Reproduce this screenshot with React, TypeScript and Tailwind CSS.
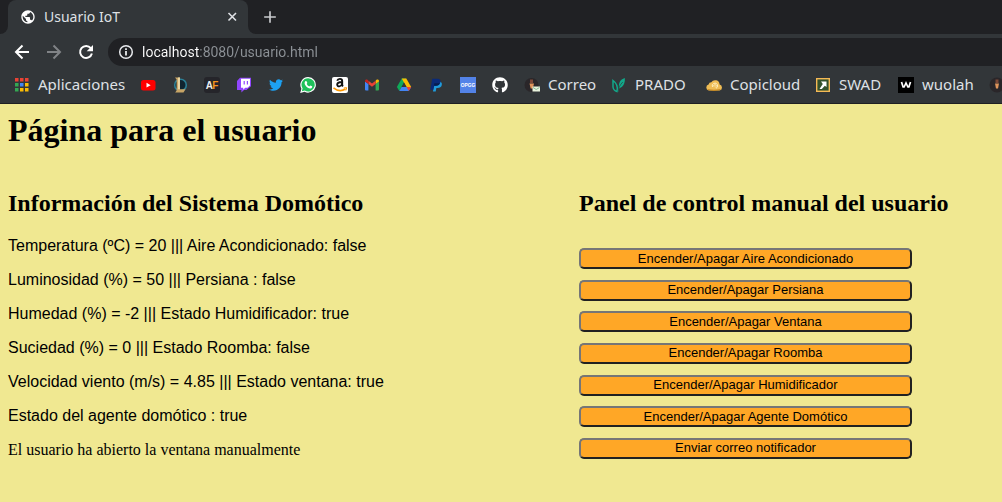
import type { ReactNode } from "react";
import { MdAdd, MdPublic } from "react-icons/md";
import { FaGithub, FaTwitter } from "react-icons/fa";

function BackIcon() {
  return (
    <svg viewBox="0 0 20 20" className="size-5" fill="none" stroke="currentColor" strokeWidth="2">
      <path d="M17 10H4.500M10.500 3.500L4 10l6.500 6.500" />
    </svg>
  );
}

function ForwardIcon() {
  return (
    <svg viewBox="0 0 20 20" className="size-5" fill="none" stroke="currentColor" strokeWidth="2">
      <path d="M3 10h12.500M9.500 3.500L16 10l-6.500 6.500" />
    </svg>
  );
}

function ReloadIcon() {
  return (
    <svg viewBox="0 0 20 20" className="size-5">
      <path d="M14.800 6.200A6 6 0 1 0 15.900 11.500" fill="none" stroke="currentColor" strokeWidth="2" />
      <path d="M17 3v6.300h-6.300z" fill="currentColor" />
    </svg>
  );
}

function CloseIcon() {
  return (
    <svg viewBox="0 0 14 14" className="size-3.5" stroke="currentColor" strokeWidth="1.600">
      <path d="M2.500 3l7.500 7.500M10 3l-7.500 7.500" />
    </svg>
  );
}

function InfoIcon() {
  return (
    <svg viewBox="0 0 16 16" className="size-4">
      <circle cx="8" cy="8" r="6.300" fill="none" stroke="currentColor" strokeWidth="1.500" />
      <path d="M8 7v4.500M8 4.200v1.800" stroke="currentColor" strokeWidth="1.800" />
    </svg>
  );
}

function AppsIcon() {
  const cells = [
    "#ea4335", "#ea4335", "#ea4335",
    "#34a853", "#4285f4", "#fbbc04",
    "#34a853", "#fbbc04", "#fbbc04",
  ];
  return (
    <svg viewBox="0 0 16 16" className="size-4">
      {cells.map((fill, i) => (
        <rect key={i} x={1 + (i % 3) * 5} y={1 + Math.floor(i / 3) * 5} width="3.500" height="3.500" fill={fill} />
      ))}
    </svg>
  );
}

function YoutubeIcon() {
  return (
    <svg viewBox="0 0 16 16" className="size-4">
      <rect x="1" y="3" width="14.5" height="10.5" rx="2.5" fill="#f00" />
      <path d="M6.5 5.8v4.8l4.2-2.4z" fill="#fff" />
    </svg>
  );
}

function LeagueIcon() {
  return (
    <svg viewBox="0 0 16 16" className="size-4">
      <circle cx="8.5" cy="8" r="5.800" fill="#10242f" stroke="#2b7f96" strokeWidth="1.600" />
      <path d="M3 .5h5v11.800h5.500L11.500 15.500H3.200l1.400-2V2.500z" fill="#c8a566" />
      <path d="M6 .5h2v11.800H6z" fill="#e8d6a4" />
    </svg>
  );
}

function AfIcon() {
  return (
    <svg viewBox="0 0 16 16" className="size-4">
      <rect width="16" height="16" rx="3" fill="#25252a" />
      <text x="1.800" y="12" fontFamily="Liberation Sans, sans-serif" fontWeight="bold" fontSize="10" fill="#eee">
        A
      </text>
      <text x="8.300" y="12" fontFamily="Liberation Sans, sans-serif" fontWeight="bold" fontSize="10" fill="#f7941d">
        F
      </text>
    </svg>
  );
}

function TwitchIcon() {
  return (
    <svg viewBox="0 0 16 16" className="size-4">
      <path d="M4 0.8h11v8.4L10.5 13H8l-2.6 2.4V13H1V4z" fill="#9146ff" />
      <path d="M5 1.8h9v6.8l-2.4 2.2H9.2l-2 2v-2H5z" fill="#fff" />
      <path d="M8.2 4v3.4M11.4 4v3.4" stroke="#9146ff" strokeWidth="1.2" />
    </svg>
  );
}

function WhatsappIcon() {
  return (
    <svg viewBox="0 0 16 16" className="size-4">
      <path d="M8.2 0A7.8 7.8 0 0 0 1.4 11.7L0.2 16l4.4-1.2A7.8 7.8 0 1 0 8.2 0z" fill="#fff" />
      <path d="M8.2 1.2A6.6 6.6 0 0 0 2.6 11.4l-.8 2.9 3-.8A6.6 6.6 0 1 0 8.2 1.2z" fill="#1fc15b" />
      <path d="M5.5 4.1c.5-.4 1-.2 1.2.3l.6 1.4c.1.4-.6 1-.6 1.2.5 1.1 1.4 1.9 2.6 2.4.3 0 .9-1 1.2-.9l1.6.8c.4.3-.1 1.5-.7 1.9-1.1.7-2.7.1-4-.8C5.800 9.300 4.600 7.700 4.600 6.100c0-.8.3-1.500.9-2z" fill="#fff" />
    </svg>
  );
}

function AmazonIcon() {
  return (
    <svg viewBox="0 0 16 16" className="size-4">
      <rect width="16" height="16" rx="2" fill="#fff" />
      <path
        d="M5.200 3.800C5.600 2.300 6.600 1.900 7.900 1.900c1.700 0 2.300.9 2.300 2.300v3.500c0 .8.400 1.200.8 1.700M10 5C6.800 5 5.200 5.700 5.200 7.600c0 2.500 4 2.300 4.900-.6"
        fill="none"
        stroke="#111"
        strokeWidth="1.900"
      />
      <path d="M1.500 10.800c4 3.300 8.500 3.400 12 1.200" fill="none" stroke="#ff9900" strokeWidth="1.500" />
      <path d="M11.700 11l3-.3-.8 2.800" fill="none" stroke="#ff9900" strokeWidth="1" />
    </svg>
  );
}

function GmailIcon() {
  return (
    <svg viewBox="0 0 16 16" className="size-4">
      <path d="M1 4.500l3.400 2.500v6.500H2a1 1 0 0 1-1-1z" fill="#4285f4" />
      <path d="M15 4.500L11.600 7v6.500H14a1 1 0 0 0 1-1z" fill="#34a853" />
      <path d="M11.600 3.700V7L15 4.500V4c0-1.400-1.500-2-2.500-1.200z" fill="#fbbc04" />
      <path d="M4.400 7V3.700L8 6.400l3.600-2.700V7L8 9.700z" fill="#ea4335" />
      <path d="M1 4v.5L4.400 7V3.700L3.500 2.800C2.500 2 1 2.600 1 4z" fill="#c5221f" />
    </svg>
  );
}

function DriveIcon() {
  return (
    <svg viewBox="0 0 16 16" className="size-4">
      <path d="M5.700 1.500h4.600L3.300 14 .9 9.900z" fill="#0fa958" />
      <path d="M5.700 1.500h4.600l4.900 8.400h-4.700z" fill="#fbbc04" />
      <path d="M5.600 9.900h9.600L12.800 14H3.300z" fill="#4285f4" />
      <path d="M10.500 9.900h4.700L12.800 14z" fill="#ea4335" />
      <path d="M8 5.600l2.500 4.300H5.600z" fill="#323639" />
    </svg>
  );
}

function PaypalIcon() {
  return (
    <svg viewBox="0 0 16 16" className="size-4">
      <path d="M6 4.500h5.500c2 .4 2.700 1.600 2.300 3.400-.5 2.200-2 3-4.300 3H8.400L7.700 14.500H5z" fill="#1f9bdc" />
      <path d="M4.200 1.800h5.300c2.400 0 3.400 1.300 3 3.300C12 7.600 10.400 8.700 8 8.700H6.200l-.8 4H2.300z" fill="#0a2a78" />
      <path d="M6.300 6.200h5.600C11 8 9.700 8.700 8 8.700H6.200l-.3 1.600z" fill="#061d4f" />
    </svg>
  );
}

function OpggIcon() {
  return (
    <svg viewBox="0 0 16 16" className="size-4">
      <rect width="16" height="16" fill="#5383e8" />
      <text x="8" y="9.600" textAnchor="middle" fontFamily="Liberation Sans, sans-serif" fontWeight="bold" fontSize="4.800" fill="#fff">OPGG</text>
    </svg>
  );
}

function MailUserIcon() {
  return (
    <svg viewBox="0 0 16 16" className="size-4">
      <circle cx="7.500" cy="8" r="7" fill="#2a2629" />
      <path d="M6 2.500h3v3.500H6z" fill="#7d4938" />
      <path d="M5.500 6.500h4.500L8.800 11.500H6.700z" fill="#e0955c" />
      <rect x="8.500" y="9.500" width="7.500" height="5" fill="#e9f3dd" />
      <path d="M9 10.500l3.200 2 3.300-2" fill="none" stroke="#7cb58d" strokeWidth="0.900" />
    </svg>
  );
}

function PradoIcon() {
  return (
    <svg viewBox="0 0 16 16" className="size-4">
      <path d="M2 3.500v6.500c.3 2.500 2 4 4 4.500 1-4-.5-8.500-4-11z" fill="none" stroke="#12a88a" strokeWidth="1.500" />
      <path d="M13.800 1C9 2.500 7.300 6 8 11.500c4-1.500 6.300-5 5.800-10.500z" fill="#12a88a" />
      <path d="M7.300 15c0-4 1.500-7 4.500-10" fill="none" stroke="#28564e" strokeWidth="0.900" />
    </svg>
  );
}

function CloudIcon() {
  return (
    <svg viewBox="0 0 16 16" className="size-4">
      <path d="M3 13.500a3 3 0 0 1-.4-5.900 2.800 2.800 0 0 1 2.700-2.300 4.500 4.500 0 0 1 8.300 2.300 3 3 0 0 1-.2 5.900z" fill="#efbd55" />
      <path d="M1.500 12.500c4 1 9 1 13 0" stroke="#c98a22" strokeWidth="1.200" fill="none" />
      <path d="M6.500 10a2.700 2.700 0 1 1 3.500 1.300M8 9.500a1.200 1.200 0 1 1 1.500.5" stroke="#fff3c8" strokeWidth="0.900" fill="none" />
    </svg>
  );
}

function SwadIcon() {
  return (
    <svg viewBox="0 0 16 16" className="size-4">
      <rect x="1.700" y="1.700" width="12.600" height="12.600" fill="#33512b" stroke="#f5b955" strokeWidth="1.400" />
      <path d="M6 4.500h5.500V10L9.800 8.800 6.800 12H4.500l3.300-5z" fill="#fff" />
    </svg>
  );
}

function WuolahIcon() {
  return (
    <svg viewBox="0 0 16 16" className="size-4">
      <rect width="16" height="16" fill="#000" />
      <path d="M3.500 5l1.600 5h1L8 6l1.900 4h1l1.600-5" fill="none" stroke="#fff" strokeWidth="1.700" />
    </svg>
  );
}

function UserIcon() {
  return (
    <svg viewBox="0 0 16 16" className="size-4">
      <circle cx="8" cy="8" r="7.500" fill="#2a2629" />
      <path d="M6.500 2.500h3v3.500h-3z" fill="#7d4938" />
      <path d="M6 6.500h4L9 11.500H7z" fill="#e0955c" />
    </svg>
  );
}

type Bookmark = { name: string; icon: ReactNode; label?: boolean; width?: string };

const bookmarks: Bookmark[] = [
  { name: "Aplicaciones", icon: <AppsIcon />, label: true, width: "w-[86px]" },
  { name: "YouTube", icon: <YoutubeIcon /> },
  { name: "League of Legends", icon: <LeagueIcon /> },
  { name: "AF", icon: <AfIcon /> },
  { name: "Twitch", icon: <TwitchIcon /> },
  { name: "Twitter", icon: <FaTwitter className="size-4 p-px text-[#1da1f2]" /> },
  { name: "WhatsApp", icon: <WhatsappIcon /> },
  { name: "Amazon", icon: <AmazonIcon /> },
  { name: "Gmail", icon: <GmailIcon /> },
  { name: "Drive", icon: <DriveIcon /> },
  { name: "PayPal", icon: <PaypalIcon /> },
  { name: "OP.GG", icon: <OpggIcon /> },
  { name: "GitHub", icon: <FaGithub className="size-4 text-white" /> },
  { name: "Correo", icon: <MailUserIcon />, label: true, width: "w-[47px]" },
  { name: "PRADO", icon: <PradoIcon />, label: true, width: "w-[55px]" },
  { name: "Copicloud", icon: <CloudIcon />, label: true, width: "w-[69px]" },
  { name: "SWAD", icon: <SwadIcon />, label: true, width: "w-[43px]" },
  { name: "wuolah", icon: <WuolahIcon />, label: true, width: "w-[51px]" },
  { name: "Perfil", icon: <UserIcon /> },
];

const readings = [
  "Temperatura (ºC) = 20 ||| Aire Acondicionado: false",
  "Luminosidad (%) = 50 ||| Persiana : false",
  "Humedad (%) = -2 ||| Estado Humidificador: true",
  "Suciedad (%) = 0 ||| Estado Roomba: false",
  "Velocidad viento (m/s) = 4.85 ||| Estado ventana: true",
  "Estado del agente domótico : true",
];

const actions = [
  "Encender/Apagar Aire Acondicionado",
  "Encender/Apagar Persiana",
  "Encender/Apagar Ventana",
  "Encender/Apagar Roomba",
  "Encender/Apagar Humidificador",
  "Encender/Apagar Agente Domótico",
  "Enviar correo notificador",
];

function TabStrip() {
  return (
    <div className="flex h-[34px] bg-[#202124]">
      <div className="flex w-2 bg-[#323639]">
        <span className="flex-1 rounded-br-lg bg-[#202124]" />
      </div>
      <div className="flex w-60 items-center rounded-t-lg bg-[#323639] pr-2 pl-3 text-[#dfe1e5]">
        <MdPublic className="size-4 text-white" />
        <span className="ml-2 flex-1 text-sm">Usuario IoT</span>
        <button type="button" aria-label="Cerrar pestaña">
          <CloseIcon />
        </button>
      </div>
      <div className="flex w-2 bg-[#323639]">
        <span className="flex-1 rounded-bl-lg bg-[#202124]" />
      </div>
      <button type="button" aria-label="Nueva pestaña" className="ml-1 text-[#c8cacd]">
        <MdAdd className="size-5" />
      </button>
    </div>
  );
}

function AddressBar() {
  return (
    <div className="flex items-center bg-[#323639] py-1 pl-3">
      <button type="button" aria-label="Atrás" className="text-white">
        <BackIcon />
      </button>
      <button type="button" aria-label="Adelante" className="ml-3 text-[#808386]">
        <ForwardIcon />
      </button>
      <button type="button" aria-label="Recargar" className="ml-3 text-white">
        <ReloadIcon />
      </button>
      <label className="ml-3 flex h-7 flex-1 items-center gap-2 rounded-l-full bg-[#202124] pl-2.5 text-[#e8eaed]">
        <InfoIcon />
        <input
          aria-label="Dirección"
          defaultValue="localhost:8080/usuario.html"
          className="flex-1 bg-[linear-gradient(90deg,#fff_57px,#8d9297_57px)] bg-clip-text font-[Roboto,sans-serif] text-sm text-transparent outline-none"
        />
      </label>
    </div>
  );
}

function BookmarkBar() {
  return (
    <nav className="flex h-[34px] items-center gap-4 overflow-hidden border-b border-[#1f2022] bg-[#323639] pb-1 pl-3.5">
      {bookmarks.map(({ name, icon, label, width }) => (
        <a key={name} href="#" aria-label={name} className="flex shrink-0 items-center gap-2 text-[15px] leading-5 text-[#dfe1e5]">
          {icon}
          {label && <span className={`${width} pb-0.5 whitespace-nowrap`}>{name}</span>}
        </a>
      ))}
    </nav>
  );
}

export default function App() {
  return (
    <div className="flex min-h-screen flex-col bg-[#f0e891]">
      <header className="font-['Noto_Sans',sans-serif]">
        <TabStrip />
        <AddressBar />
        <BookmarkBar />
      </header>
      <main className="px-2 pt-2 pb-10 font-['Liberation_Serif',serif] text-base text-black">
        <h1 className="text-[32px] leading-9 font-bold">Página para el usuario</h1>
        <div className="mt-[41px] grid grid-cols-[571fr_415fr]">
          <section className="flex flex-col">
            <h2 className="text-2xl leading-7 font-bold">Información del Sistema Domótico</h2>
            <div className="mt-5 flex flex-col gap-4 leading-[18px]">
              {readings.map((text) => (
                <p key={text} className="font-['Liberation_Sans',sans-serif]">{text}</p>
              ))}
              <p>El usuario ha abierto la ventana manualmente</p>
            </div>
          </section>
          <section className="flex flex-col">
            <h2 className="text-2xl leading-7 font-bold whitespace-nowrap">Panel de control manual del usuario</h2>
            <div className="mt-[31px] flex flex-1 flex-col justify-between pr-[82px]">
              {actions.map((text) => (
                <button
                  key={text}
                  type="button"
                  className="h-[21px] rounded-[5px] border-2 border-t-[#767676] border-r-[#212121] border-b-[#212121] border-l-[#767676] bg-[#ffa726] font-['Liberation_Sans',sans-serif] text-[13px] leading-4"
                >
                  {text}
                </button>
              ))}
            </div>
          </section>
        </div>
      </main>
    </div>
  );
}
